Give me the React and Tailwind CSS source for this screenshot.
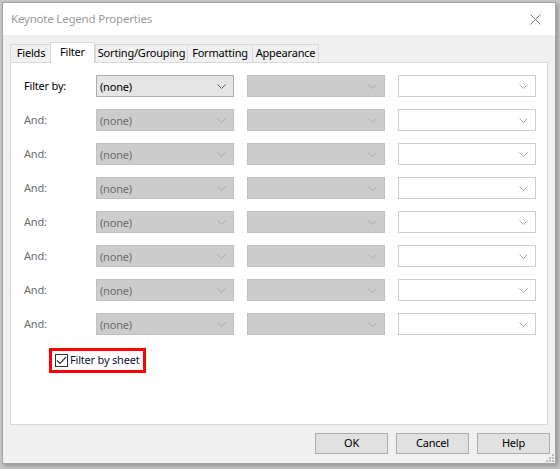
import React from "react";

const TABS = [
  { label: "Fields", w: "w-[41px]" },
  { label: "Filter", w: "w-[45px]", active: true },
  { label: "Sorting/Grouping", w: "w-[92px]" },
  { label: "Formatting", w: "w-[65px]" },
  { label: "Appearance", w: "w-[67px]" },
];

const ROWS = ["Filter by:", "And:", "And:", "And:", "And:", "And:", "And:", "And:"];

function Chevron({ color }) {
  return (
    <svg width="9" height="5" viewBox="0 0 9 5" className="shrink-0">
      <path d="M0.5 0.5 L4.5 4.5 L8.5 0.5" fill="none" stroke={color} strokeWidth="1" />
    </svg>
  );
}

// combo variants: enabled (grey face), disabled (darker grey), blank (white)
function Combo({ variant, text }) {
  const styles = {
    enabled: "bg-[#e5e5e5] border-[#adadad] text-black",
    disabled: "bg-[#cccccc] border-[#bfbfbf] text-[#6d6d6d]",
    blank: "bg-white border-[#cccccc] text-black",
  };
  const chevron = variant === "enabled" ? "#606060" : "#a8a8a8";
  return (
    <div
      className={`flex h-[22px] w-[138px] items-center justify-between border pl-[3px] pr-[7px] ${styles[variant]}`}
    >
      <span className="leading-none">{text}</span>
      <Chevron color={chevron} />
    </div>
  );
}

export default function App() {
  return (
    <div
      className="h-[469px] w-[560px] overflow-hidden bg-[#c6c6c6] pl-[2px] pt-[2px] text-[11px] tracking-[-0.2px] text-black"
      style={{ fontFamily: "'Noto Sans', 'Open Sans', sans-serif" }}
    >
      <div className="flex h-[462px] w-[554px] flex-col border border-[#a3a3a3] bg-[#f0f0f0] shadow-[2px_2px_4px_rgba(0,0,0,0.25)]">
        {/* title bar */}
        <div className="flex h-[32px] items-center justify-between bg-white pl-[8px] pr-[8px]">
          <span className="text-[11.5px] text-[#999999]">Keynote Legend Properties</span>
          <svg width="11" height="11" viewBox="0 0 11 11" className="mr-[6px]">
            <path d="M0.5 0.5 L10.5 10.5 M10.5 0.5 L0.5 10.5" stroke="#7a7a7a" strokeWidth="1" />
          </svg>
        </div>

        {/* tab strip */}
        <div className="flex h-[27px] items-end pl-[7px]">
          {TABS.map((t, i) =>
            t.active ? (
              <div
                key={t.label}
                className={`relative z-10 -mb-px -ml-px flex h-[21px] items-start justify-center border-x border-t border-[#d9d9d9] bg-white pt-[1px] ${t.w}`}
              >
                {t.label}
              </div>
            ) : (
              <div
                key={t.label}
                className={`flex h-[18px] items-center justify-center border-t border-l border-[#d9d9d9] bg-[#f0f0f0] ${
                  i === TABS.length - 1 ? "border-r" : ""
                } ${t.w}`}
              >
                {t.label}
              </div>
            )
          )}
        </div>

        {/* tab page */}
        <div className="ml-[7px] flex h-[363px] w-[538px] flex-col border border-[#d9d9d9] bg-white pl-[13px] pt-[12px]">
          <div className="flex flex-col gap-[12px]">
            {ROWS.map((label, i) => (
              <div key={i} className="flex items-center">
                <span className={`w-[72px] ${i === 0 ? "text-black" : "text-[#6d6d6d]"}`}>{label}</span>
                <div className="flex gap-[13px]">
                  <Combo variant={i === 0 ? "enabled" : "disabled"} text="(none)" />
                  <Combo variant="disabled" text="" />
                  <Combo variant="blank" text="" />
                </div>
              </div>
            ))}
          </div>

          <div className="ml-[25px] mt-[13px] flex h-[25px] w-[97px] items-center gap-[2px] border-[3px] border-[#ff0000] pl-[3px]">
            <div className="flex h-[13px] w-[13px] items-center justify-center border border-[#333333] bg-white">
              <svg width="11" height="9" viewBox="0 0 11 9">
                <path d="M1 4.5 L4 7.5 L10 1" fill="none" stroke="#333333" strokeWidth="1.2" />
              </svg>
            </div>
            <span className="whitespace-nowrap text-[#101040]">Filter by sheet</span>
          </div>
        </div>

        {/* buttons */}
        <div className="relative flex flex-1 items-start justify-end gap-[8px] pr-[5px] pt-[8px]">
          {["OK", "Cancel", "Help"].map((b) => (
            <div
              key={b}
              className="flex h-[21px] w-[73px] items-center justify-center border border-[#adadad] bg-[#e1e1e1]"
            >
              {b}
            </div>
          ))}
          {/* size grip */}
          <svg width="8" height="8" viewBox="0 0 8 8" className="absolute bottom-[1px] right-[1px]">
            <rect x="6" y="0" width="2" height="2" fill="#bcbcbc" />
            <rect x="3" y="3" width="2" height="2" fill="#bcbcbc" />
            <rect x="6" y="3" width="2" height="2" fill="#bcbcbc" />
            <rect x="0" y="6" width="2" height="2" fill="#bcbcbc" />
            <rect x="3" y="6" width="2" height="2" fill="#bcbcbc" />
            <rect x="6" y="6" width="2" height="2" fill="#bcbcbc" />
          </svg>
        </div>
      </div>
    </div>
  );
}
